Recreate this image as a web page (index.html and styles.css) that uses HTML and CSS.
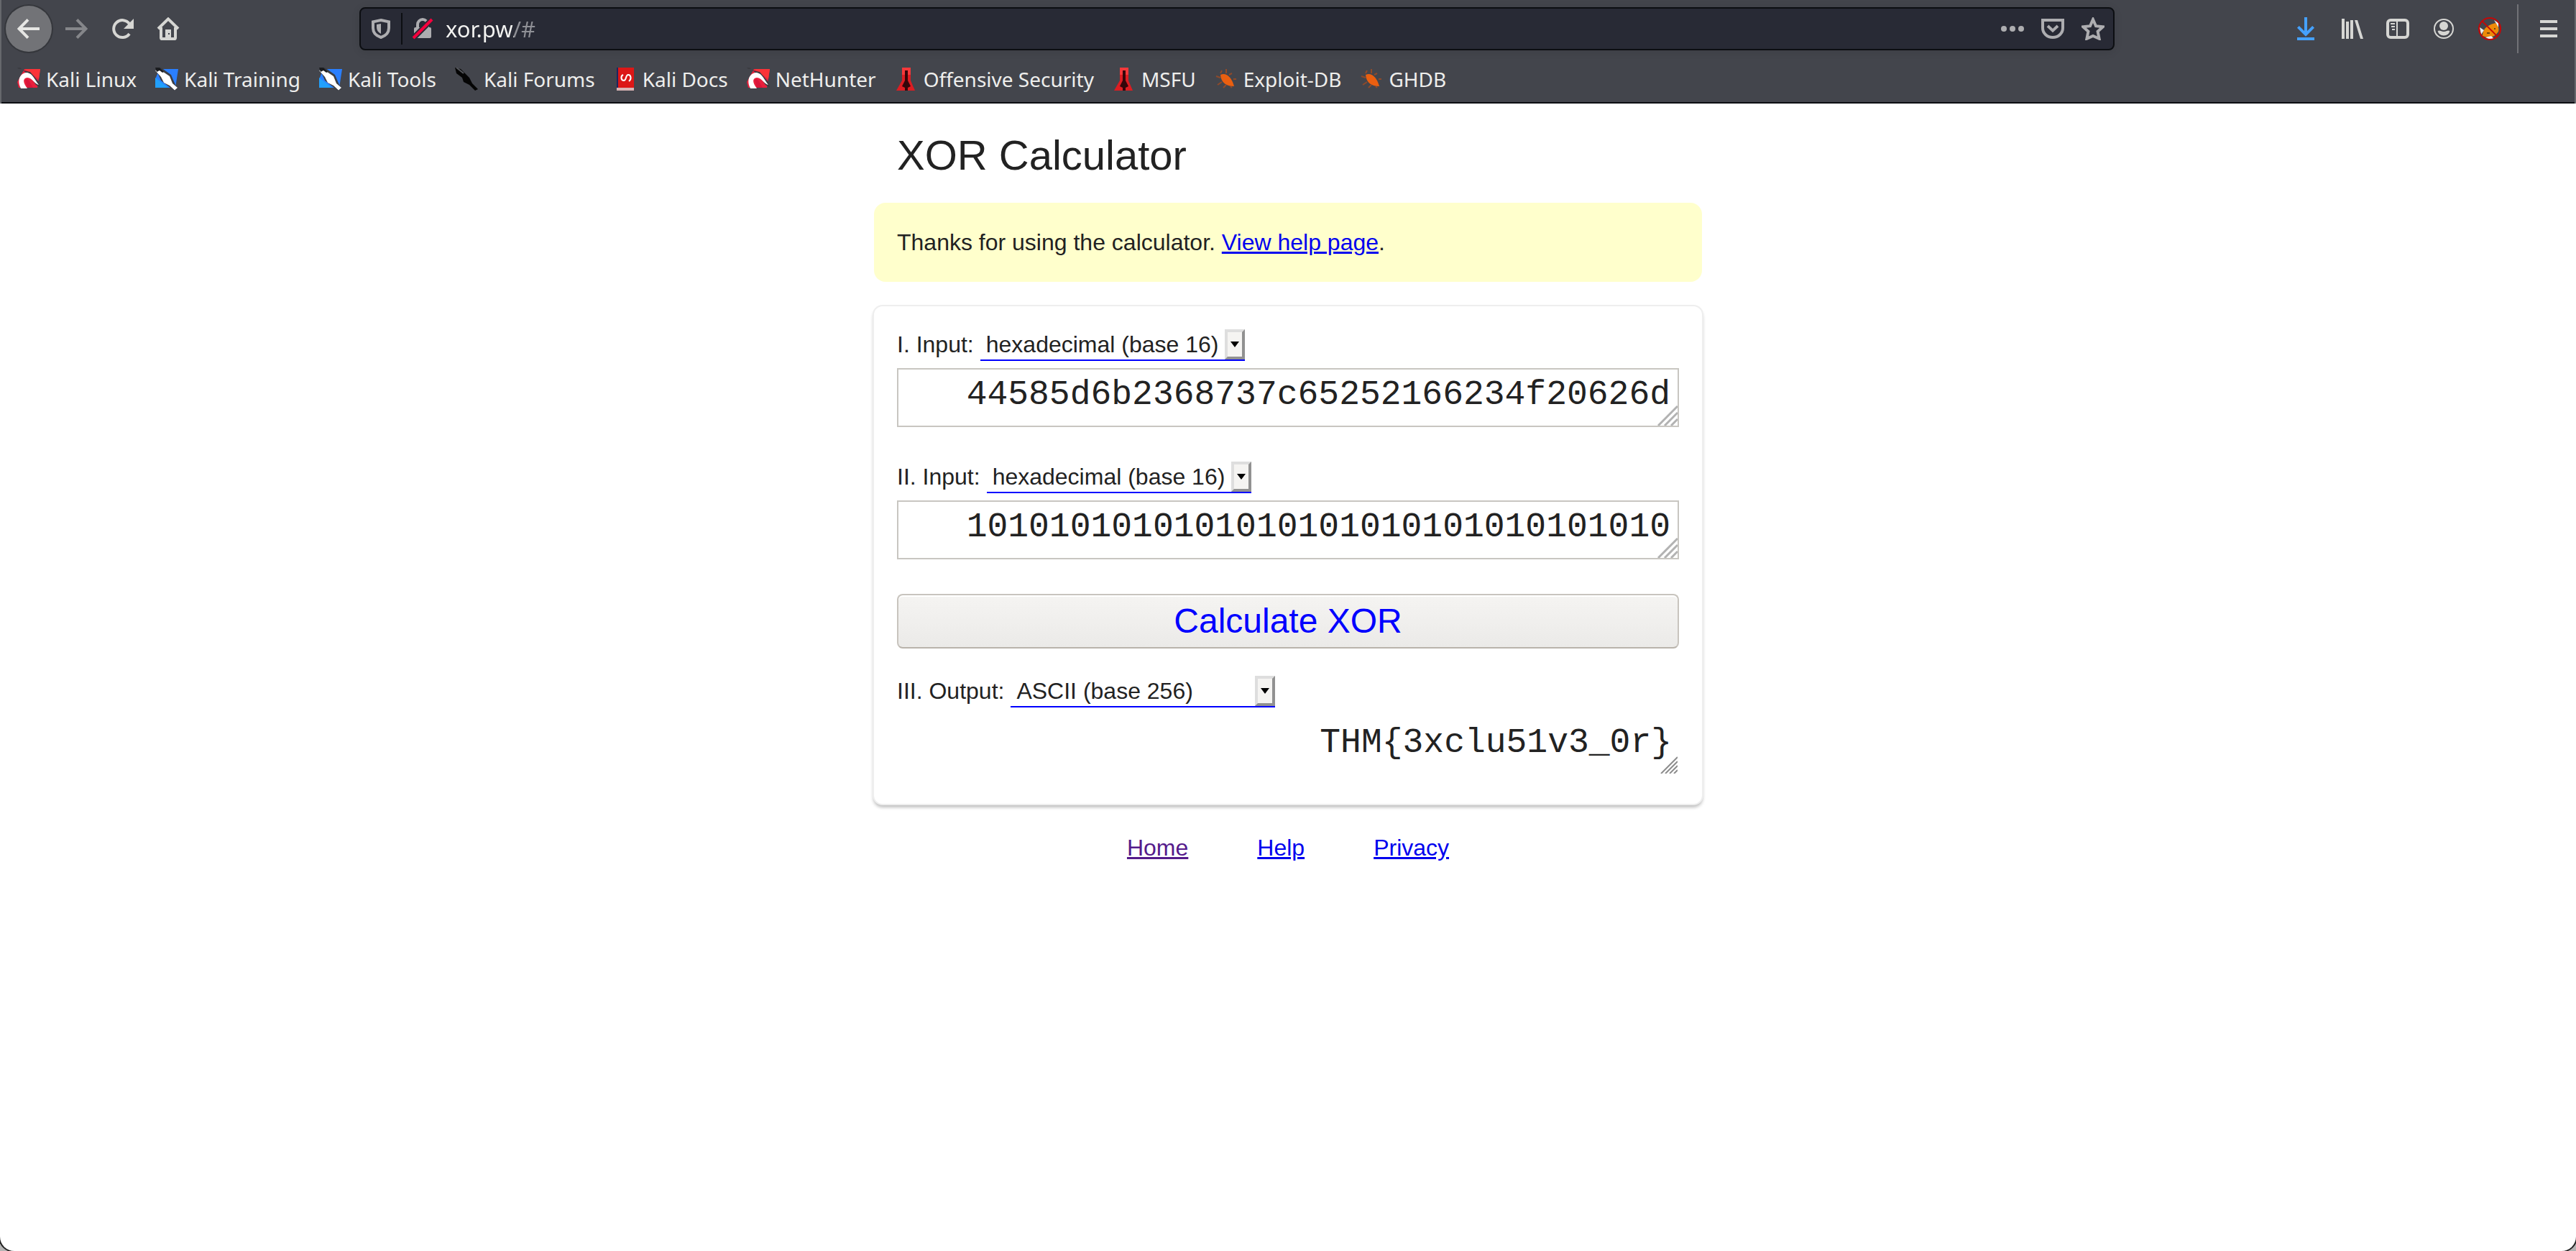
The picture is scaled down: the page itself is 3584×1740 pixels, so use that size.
FILE: index.html
```html
<!DOCTYPE html>
<html lang="en">
<head>
<meta charset="utf-8">
<title>XOR Calculator</title>
<link rel="stylesheet" href="styles.css">
</head>
<body>
<svg class="sprite" aria-hidden="true">
  <symbol id="dragon" viewBox="0 0 16 16">
    <path d="M5 1h11l-2 13H1l-1-4z" fill="#e8203c"/>
    <path d="M5 1h11l-1 7z" fill="#fb3338"/>
    <path d="M0 0h2l1 1H1zM4 2l5 1 6 7 1 4-3-2-4-6z" fill="#3a3b40"/>
    <path d="M2.500 14.500C-1 8 3 3 7 3.500c4 .8 5 5 8 8.500-3-.5-4.500-5-8-5-3.500.5-3 3.500 0 7.500z" fill="#fff"/>
    <path d="M5.500 8.500c2-1.500 3 1 5.500 5.500H7z" fill="#d9163a"/>
  </symbol>
  <symbol id="knife" viewBox="0 0 16 16">
    <path d="M3 1h13l-2 13H0V8z" fill="#2a7fff"/>
    <path d="M0 7l9 7H0z" fill="#22a0fb"/>
    <path d="M0 0h4l7 5 3 7 2 3-3 1L4 9z" fill="#3c3e44"/>
    <path d="M0 2l4 0 6 4 2 5 3.500 3-2 1.800L10 12.500 6 10.500 4 6.500z" fill="#fff"/>
    <path d="M0 0h3l3 3-1 .5L3 2 1 3z" fill="#1b1c1f"/>
  </symbol>
  <symbol id="tower" viewBox="0 0 16 16">
    <path d="M5 0h6v9l3 7H1l4-7z" fill="#dc1d22"/>
    <path d="M5 0h6v5H5z" fill="#f5383a"/>
    <path d="M7 2h2v7l2 4-2 1v2H7v-2l-2-1 2-4z" fill="#35060a"/>
  </symbol>
  <symbol id="bug" viewBox="0 0 16 16">
    <path d="M5 2L4 4M8 1v3M12 4l-2 1M1 6l3 1M2 12l3-2M13 8h2M6 14l2-2M12 14l-1-1" stroke="#8f4a2a" fill="none"/>
    <path d="M4 5c4-2 8 2 9.500 8-5 0-9-2-9.500-8z" fill="#ea5f10"/>
  </symbol>
  <symbol id="grip" viewBox="0 0 28 28">
    <path d="M1 28L28 1M10 28L28 10M19 28l9-9" stroke="#b2b2b2" stroke-width="3" fill="none"/>
  </symbol>
</svg>

<header class="chrome">
  <div class="navbar">
    <div class="tools">
      <button class="tool back" aria-label="Back"><svg viewBox="0 0 16 16"><path d="M15.500 8H1.500M7.500 1.700L1.300 8l6.200 6.300" class="line"/></svg></button>
      <button class="tool dim" aria-label="Forward"><svg viewBox="0 0 16 16"><path d="M.5 8h14M8.500 1.700L14.700 8l-6.200 6.300" class="line"/></svg></button>
      <button class="tool" aria-label="Reload"><svg viewBox="0 0 16 16"><path d="M13 4.600A6 6 0 1 0 13 11.500" class="line"/><path d="M16 1v7H9z" fill="currentColor"/></svg></button>
      <button class="tool" aria-label="Home"><svg viewBox="0 0 16 16"><path d="M1 8l7-6.800L15 8M3 7v7.200q0 .8.8.8h8.400q.8 0 .8-.8V7" class="line"/><path d="M6 8.500h4V15H6z" fill="currentColor"/><path d="M8 11h1v1H8z" fill="#42444b"/></svg></button>
    </div>
    <div class="urlbar">
      <svg class="glyph" viewBox="0 0 16 16"><path d="M8 2l5.500 1.200v4.300c0 3.300-2.500 5.500-5.500 6.500-3-1-5.500-3.200-5.500-6.500V3.200z" class="line"/><path d="M8 4.500v7c-2-1-3-2.500-3-4.500V5z" fill="currentColor"/></svg>
      <span class="split"></span>
      <svg class="glyph" viewBox="0 0 16 16"><path d="M4.500 7V5a3.500 3.500 0 0 1 7 0v2" class="line"/><rect x="2" y="7" width="12" height="7.500" rx="1" fill="currentColor"/><path d="M1.500 14.500L14.500 1.500" stroke="#282a35" stroke-width="4"/><path d="M1.500 14.500L14.500 1.500" stroke="#f5003d" stroke-width="2"/></svg>
      <input class="url" type="text" value="xor.pw/#" aria-label="Address">
      <div class="actions">
        <svg class="glyph" viewBox="0 0 16 16" fill="currentColor"><circle cx="2" cy="8" r="2"/><circle cx="8" cy="8" r="2"/><circle cx="14" cy="8" r="2"/></svg>
        <svg class="glyph" viewBox="0 0 16 16"><path d="M1 2h14v5.500a7 6.500 0 0 1-14 0zM4.500 6L8 9.300 11.500 6" class="line"/></svg>
        <svg class="glyph" viewBox="0 0 16 16"><path d="M8 1.500l2 4.600 5 .5-3.700 3.300 1 5L8 13l-4.300 1.900 1-5L1 6.600l5-.5z" class="line"/></svg>
      </div>
    </div>
    <div class="tools">
      <button class="tool download" aria-label="Downloads"><svg viewBox="0 0 16 16"><path d="M8 0v12M2.700 6.700L8 12l5.300-5.300M2 15h12" class="line"/></svg></button>
      <button class="tool" aria-label="Library"><svg viewBox="0 0 16 16" fill="currentColor"><path d="M1 1h2v14H1zM4 3h2v12H4zM7 2h2v13H7zM10 2h2l4 13h-2z"/></svg></button>
      <button class="tool" aria-label="Sidebar"><svg viewBox="0 0 16 16"><rect x="1" y="2" width="14" height="12" rx="2" class="line"/><path d="M7 2h1v12H7zM3 4h3v1H3zM3.500 6H6v1H3.500zM4 8h2v1H4z" fill="currentColor"/></svg></button>
      <button class="tool" aria-label="Account"><svg viewBox="0 0 16 16"><circle cx="8" cy="8" r="6.500" stroke="currentColor" fill="none"/><circle cx="8" cy="6" r="3" fill="currentColor"/><path d="M3.800 9.500q1.200-.5 2.200 0 2 1 4 0 1-.5 2.200 0-.7 3.200-4.200 3.200T3.800 9.500z" fill="currentColor"/></svg></button>
      <button class="tool" aria-label="Proxy switcher"><svg viewBox="0 0 16 16"><path d="M3 13q0-7 9-9 3 3 2 6-4 6-11 3z" fill="#ee8a09"/><path d="M11 2l3 2v3zM1 7l3 2-2 3zM5 14l4-1 2 2H7z" fill="#eee"/><path d="M6 11h2M11 8h1" stroke="#6d4510"/><circle cx="8" cy="8" r="7.500" fill="none" stroke="#c40808"/><path d="M2.700 2.700l10.600 10.600" stroke="#c40808"/></svg></button>
      <span class="divider"></span>
      <button class="tool" aria-label="Menu"><svg viewBox="0 0 16 16"><path d="M2 3h12M2 8h12M2 13h12" class="line"/></svg></button>
    </div>
  </div>
  <nav class="bookmarks" aria-label="Bookmarks">
    <a href="#"><svg><use href="#dragon"/></svg>Kali Linux</a>
    <a href="#"><svg><use href="#knife"/></svg>Kali Training</a>
    <a href="#"><svg><use href="#knife"/></svg>Kali Tools</a>
    <a href="#"><svg viewBox="0 0 16 16"><path d="M0 0l4 1 3 3 3 3 2 4 4 4-2 1-4-4-4-2-1-3-4-3z" fill="#050505"/><path d="M1 0l5 4" stroke="#55575c"/></svg>Kali Forums</a>
    <a href="#"><svg viewBox="0 0 16 16"><path d="M2 0h1v15H2z" fill="#1d2560"/><path d="M3 0h11v14H3z" fill="#dc1717"/><path d="M2 14h12v2H2z" fill="#d9b5b5"/><path d="M6.500 5C4.500 6 5 9 7 9s1-4 3-4 2.500 3 .5 4.500" stroke="#fff" fill="none"/></svg>Kali Docs</a>
    <a href="#"><svg><use href="#dragon"/></svg>NetHunter</a>
    <a href="#"><svg><use href="#tower"/></svg>Offensive Security</a>
    <a href="#"><svg><use href="#tower"/></svg>MSFU</a>
    <a href="#"><svg><use href="#bug"/></svg>Exploit-DB</a>
    <a href="#"><svg><use href="#bug"/></svg>GHDB</a>
  </nav>
</header>

<main class="page">
  <h1>XOR Calculator</h1>
  <p class="notice">Thanks for using the calculator. <a href="#">View help page</a>.</p>
  <form class="card">
    <div class="field">
      <div class="caption">
        <label for="base1">I. Input:</label>
        <span class="picker"><select id="base1"><option>hexadecimal (base 16)</option></select><span class="arrow"></span></span>
      </div>
      <div class="box"><textarea rows="1" aria-label="First input">44585d6b2368737c65252166234f20626d</textarea><svg class="grip"><use href="#grip"/></svg></div>
    </div>
    <div class="field">
      <div class="caption">
        <label for="base2">II. Input:</label>
        <span class="picker"><select id="base2"><option>hexadecimal (base 16)</option></select><span class="arrow"></span></span>
      </div>
      <div class="box"><textarea rows="1" aria-label="Second input">1010101010101010101010101010101010</textarea><svg class="grip"><use href="#grip"/></svg></div>
    </div>
    <button class="submit" type="button">Calculate XOR</button>
    <div class="field output">
      <div class="caption">
        <label for="base3">III. Output:</label>
        <span class="picker"><select id="base3"><option>ASCII (base 256)</option></select><span class="arrow"></span></span>
      </div>
      <div class="box"><textarea rows="1" readonly aria-label="Output">THM{3xclu51v3_0r}</textarea><svg class="grip" viewBox="0 0 24 24"><path d="M1 24L24 1M7 24L24 7M13 24l11-11M19 24l5-5" stroke="#8c8c8c" stroke-width="2" fill="none"/></svg></div>
    </div>
  </form>
  <footer class="links">
    <a class="seen" href="#">Home</a>
    <a href="#">Help</a>
    <a href="#">Privacy</a>
  </footer>
</main>
</body>
</html>
```
FILE: styles.css
```css
* {
  box-sizing: border-box;
}

html {
  background: #b4b4b4;
}

body {
  margin: 0;
  min-height: 100vh;
  background: #fff;
  border-radius: 0 0 20px 20px;
  box-shadow: 0 0 0 2px #222;
  color: #222;
  font: 32px/46px "Liberation Sans", Arial, sans-serif;
}

.sprite {
  display: none;
}

/* Browser toolbars */
.chrome {
  background: #43454c;
  border: solid #66686c;
  border-width: 0 2px;
  box-shadow: inset 0 -2px #0c0e12;
  padding-bottom: 2px;
  font: 28px/40px "Noto Sans", sans-serif;
}

.navbar {
  display: flex;
  align-items: center;
  justify-content: space-between;
  height: 80px;
  padding: 0 4px 0 6px;
}

.tools {
  display: flex;
  align-items: center;
}

.tool {
  display: grid;
  place-items: center;
  width: 64px;
  height: 64px;
  padding: 0;
  border: 0;
  background: none;
  color: #d6d6d3;
}

.tool svg,
.glyph {
  width: 32px;
  height: 32px;
  flex: none;
}

.line {
  fill: none;
  stroke: currentColor;
  stroke-width: 2;
}

.back {
  margin-right: 2px;
  border-radius: 50%;
  background: #727377;
  box-shadow: 0 0 0 2px #35373c;
  color: #e6e6e4;
}

.dim {
  color: #85868a;
}

.download {
  color: #45a1ff;
}

.divider {
  width: 2px;
  height: 68px;
  margin: 0 10px 0 6px;
  background: #717277;
}

.urlbar {
  display: flex;
  align-items: center;
  flex: 1;
  height: 60px;
  margin: 0 234px;
  padding: 0 12px;
  border: 2px solid #0c0e12;
  border-radius: 8px;
  background: #282a35;
  box-shadow: 0 2px 12px rgba(0, 0, 0, 0.1);
  color: #adadb0;
}

.split {
  width: 2px;
  height: 44px;
  margin: 0 12px;
  background: #0c0e12;
}

.url {
  flex: 1;
  min-width: 0;
  height: 44px;
  margin-left: 16px;
  padding: 0;
  border: 0;
  font: 31px/44px "Noto Sans", sans-serif;
  color: transparent;
  background: linear-gradient(90deg, #f4f4f2 95px, #8f9096 95px);
  background-clip: text;
  caret-color: #fff;
}

.actions {
  display: flex;
  gap: 24px;
}

.bookmarks {
  display: flex;
  align-items: center;
  gap: 26px;
  height: 60px;
  margin-bottom: 2px;
  padding: 0 22px;
}

.bookmarks a {
  display: flex;
  align-items: center;
  gap: 8px;
  color: #eeeeec;
  text-decoration: none;
  white-space: nowrap;
}

.bookmarks svg {
  width: 32px;
  height: 32px;
}

/* Calculator */
.page {
  max-width: 1152px;
  margin: 0 auto;
  padding: 32px 0;
}

h1 {
  margin: 0 32px 26px;
  font-size: 58px;
  font-weight: 400;
  line-height: 80px;
}

a {
  color: #00e;
}

.notice {
  margin: 0 0 34px;
  padding: 32px;
  border-radius: 16px;
  background: #ffc;
}

.card {
  padding: 32px 32px 42px;
  border-radius: 12px;
  box-shadow: 0 0 0 2px #eee, 0 4px 4px 1px rgba(0, 0, 0, 0.25);
  background: #fff;
}

.field {
  margin-bottom: 48px;
}

.caption {
  display: flex;
  gap: 9px;
  margin-bottom: 10px;
  line-height: 42px;
}

.picker {
  position: relative;
  width: 368px;
}

select {
  display: block;
  width: 100%;
  height: 44px;
  padding: 0 28px 0 8px;
  border: 0;
  border-bottom: 2px solid #00f;
  border-radius: 0;
  appearance: none;
  background: none;
  color: inherit;
  font: inherit;
}

.arrow {
  position: absolute;
  top: 0;
  right: 0;
  width: 28px;
  height: 42px;
  border: 4px solid;
  border-color: #dedede #919191 #919191 #dedede;
  background: #f5f4f2;
  pointer-events: none;
}

.arrow::after {
  content: "";
  position: absolute;
  inset: 13px 4px auto;
  border: solid transparent;
  border-width: 8px 6px 0;
  border-top-color: #000;
}

.box {
  position: relative;
}

textarea {
  display: block;
  width: 100%;
  height: 82px;
  padding: 8px 10px 14px;
  border: 2px solid #c8c6c1;
  background: none;
  color: inherit;
  font: 48px/54px "Liberation Mono", "Courier New", monospace;
  text-align: right;
  resize: none;
  overflow: hidden;
}

.grip {
  position: absolute;
  right: 2px;
  bottom: 2px;
  width: 28px;
  height: 28px;
  pointer-events: none;
}

.submit {
  display: block;
  width: 100%;
  height: 76px;
  margin-bottom: 38px;
  padding: 0;
  border: 2px solid #c8c4be;
  border-bottom-color: #b9b3ab;
  border-radius: 8px;
  background: linear-gradient(#f5f4f2, #ebeae8);
  box-shadow: inset 0 2px #fff;
  color: #00f;
  font: 48px/54px "Liberation Sans", Arial, sans-serif;
}

.output {
  margin: 0;
}

.output textarea {
  border-color: transparent;
  padding: 10px 8px 12px;
}

.output .grip {
  bottom: 0;
  width: 24px;
  height: 24px;
}

.links {
  display: flex;
  justify-content: center;
  gap: 96px;
  padding-top: 38px;
}

.seen {
  color: #551a8b;
}
```
